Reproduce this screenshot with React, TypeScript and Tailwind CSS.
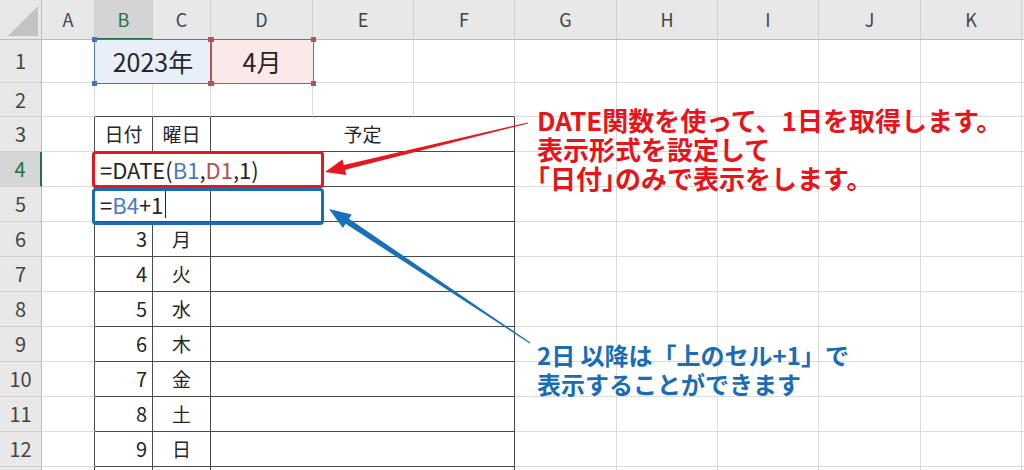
import * as React from 'react';

const COLS = ['A', 'B', 'C', 'D', 'E', 'F', 'G', 'H', 'I', 'J', 'K'];
const DAYS = ['月', '火', '水', '木', '金', '土', '日'];

const grid = 'border-r border-b border-[#dcdcdc]';
const dark = 'border-[#4a4a4a]';

function RowHead({ n, active }: { n: number; active?: boolean }) {
  return (
    <div
      className={
        'flex items-center justify-center border-b border-b-[#d0d0d0] text-[20px] ' +
        (active
          ? 'bg-[#d6d6d6] text-[#217346] border-r-2 border-r-[#217346]'
          : 'bg-[#e8e8e8] text-[#444] border-r border-r-[#bcbcbc]')
      }
    >
      {n}
    </div>
  );
}

function Empty({ count }: { count: number }) {
  return (
    <>
      {Array.from({ length: count }).map((_, i) => (
        <div key={i} className={grid} />
      ))}
      <div className="border-b border-[#dcdcdc]" />
    </>
  );
}

function Handles({ color }: { color: string }) {
  const c = color === 'blue' ? 'bg-[#4a72c0]' : 'bg-[#b4545a]';
  return (
    <>
      <span className={'absolute -left-[3px] -top-[3px] w-[5px] h-[5px] ' + c} />
      <span className={'absolute -right-[3px] -top-[3px] w-[5px] h-[5px] ' + c} />
      <span className={'absolute -left-[3px] -bottom-[3px] w-[5px] h-[5px] ' + c} />
      <span className={'absolute -right-[3px] -bottom-[3px] w-[5px] h-[5px] ' + c} />
    </>
  );
}

export default function App() {
  return (
    <div className="relative w-[1024px] h-[470px] overflow-hidden bg-white text-[#262626] font-['Noto_Sans_CJK_JP','Noto_Sans',sans-serif]">
      <div className="grid grid-cols-[42px_53px_58px_58px_102px_101px_101px_102px_101px_101px_102px_101px_2px] grid-rows-[40px_43px_34px_repeat(11,35px)]">
        {/* header row */}
        <div className="relative bg-[#e8e8e8] border-r border-b border-[#bcbcbc]">
          <div className="absolute right-[3px] bottom-[3px] w-0 h-0 border-l-[30px] border-l-transparent border-b-[30px] border-b-[#c3c3c3]" />
        </div>
        {COLS.map((c) => (
          <div
            key={c}
            className={
              'flex items-center justify-center text-[18px] border-r border-r-[#cfcfcf] ' +
              (c === 'B'
                ? 'bg-[#d4d4d4] text-[#217346] border-b-2 border-b-[#217346]'
                : 'bg-[#e8e8e8] text-[#444] border-b border-b-[#bcbcbc]')
            }
          >
            {c}
          </div>
        ))}
        <div className="bg-[#e8e8e8] border-b border-[#bcbcbc]" />

        {/* row 1 */}
        <RowHead n={1} />
        <div className={grid} />
        <div className="relative col-span-2 flex items-center justify-center bg-[#e9eff9] text-[25px]">
          <div className="absolute -inset-px z-10 border border-[#4a72c0]">
            <Handles color="blue" />
          </div>
          2023年
        </div>
        <div className="relative flex items-center justify-center bg-[#fbe8e8] text-[25px]">
          <div className="absolute -inset-px z-10 border border-[#b4545a]">
            <Handles color="red" />
          </div>
          4月
        </div>
        <Empty count={7} />

        {/* row 2 */}
        <RowHead n={2} />
        <div className={grid} />
        <div className={'border-r border-r-[#dcdcdc] border-b ' + dark} />
        <div className={'border-r border-r-[#dcdcdc] border-b ' + dark} />
        <div className={'border-r border-r-[#dcdcdc] border-b ' + dark} />
        <div className={'border-r border-r-[#dcdcdc] border-b ' + dark} />
        <div className={'border-r border-r-[#dcdcdc] border-b ' + dark} />
        <Empty count={5} />

        {/* row 3 */}
        <RowHead n={3} />
        <div className={'border-b border-b-[#dcdcdc] border-r ' + dark} />
        <div className={'flex items-center justify-center text-[19px] border-r border-b ' + dark}>日付</div>
        <div className={'flex items-center justify-center text-[19px] border-r border-b ' + dark}>曜日</div>
        <div className={'col-span-3 flex items-center justify-center text-[19px] border-r border-b ' + dark}>予定</div>
        <Empty count={5} />

        {/* row 4 */}
        <RowHead n={4} active />
        <div className={'border-b border-b-[#dcdcdc] border-r ' + dark} />
        <div className={'col-span-5 flex items-center pl-[5px] text-[22px] whitespace-nowrap border-r border-b ' + dark}>
          =DATE(<span className="text-[#4a78c4]">B1</span>,<span className="text-[#b5504f]">D1</span>,1)
        </div>
        <Empty count={5} />

        {/* row 5 */}
        <RowHead n={5} />
        <div className={'border-b border-b-[#dcdcdc] border-r ' + dark} />
        <div className={'col-span-2 flex items-center pl-[5px] text-[22px] whitespace-nowrap border-r border-b ' + dark}>
          =<span className="text-[#4a78c4]">B4</span>+1
          <span className="ml-[2px] w-px h-[28px] bg-[#222]" />
        </div>
        <div className={'col-span-3 border-r border-b ' + dark} />
        <Empty count={5} />

        {/* rows 6-13 */}
        {[...DAYS, ''].map((d, i) => (
          <React.Fragment key={i}>
            {d ? <RowHead n={i + 6} /> : <div className="bg-[#e8e8e8] border-r border-[#bcbcbc]" />}
            <div className={'border-b border-b-[#dcdcdc] border-r ' + dark} />
            <div className={'flex items-center justify-end pr-[5px] text-[20px] border-r border-b ' + dark}>
              {d ? i + 3 : ''}
            </div>
            <div className={'flex items-center justify-center text-[19px] border-r border-b ' + dark}>{d}</div>
            <div className={'col-span-3 border-r border-b ' + dark} />
            <Empty count={5} />
          </React.Fragment>
        ))}
      </div>

      {/* highlight boxes */}
      <div className="absolute left-[92px] top-[151px] w-[232px] h-[37px] border-[3px] border-[#e8161d] rounded-[4px]" />
      <div className="absolute left-[92px] top-[188px] w-[232px] h-[37px] border-[3px] border-[#1a6cb4] rounded-[4px]" />

      {/* arrows */}
      <svg className="absolute inset-0 pointer-events-none" width="1024" height="470" viewBox="0 0 1024 470">
        <polygon
          fill="#e8161d"
          points="528.1,123.5 345,169.7 346.3,175.1 325,172 342.5,159.5 343.8,164.9 527.9,122.5"
        />
        <polygon
          fill="#1670bc"
          points="529.7,343.4 345.6,223.7 342.9,227.9 329,209 351.7,214.5 349,218.7 530.3,342.6"
        />
      </svg>

      {/* annotations */}
      <div className="absolute left-[537px] top-[105px] text-[26px] leading-[29px] font-bold text-[#e8141b] whitespace-nowrap">
        <div>DATE関数を使って、1日を取得します。</div>
        <div>表示形式を設定して</div>
        <div>｢日付｣のみで表示をします。</div>
      </div>
      <div className="absolute left-[537px] top-[340px] text-[24px] leading-[29px] font-bold text-[#1a6db5] whitespace-nowrap">
        <div>2日 以降は「上のセル+1」で</div>
        <div>表示することができます</div>
      </div>
    </div>
  );
}
